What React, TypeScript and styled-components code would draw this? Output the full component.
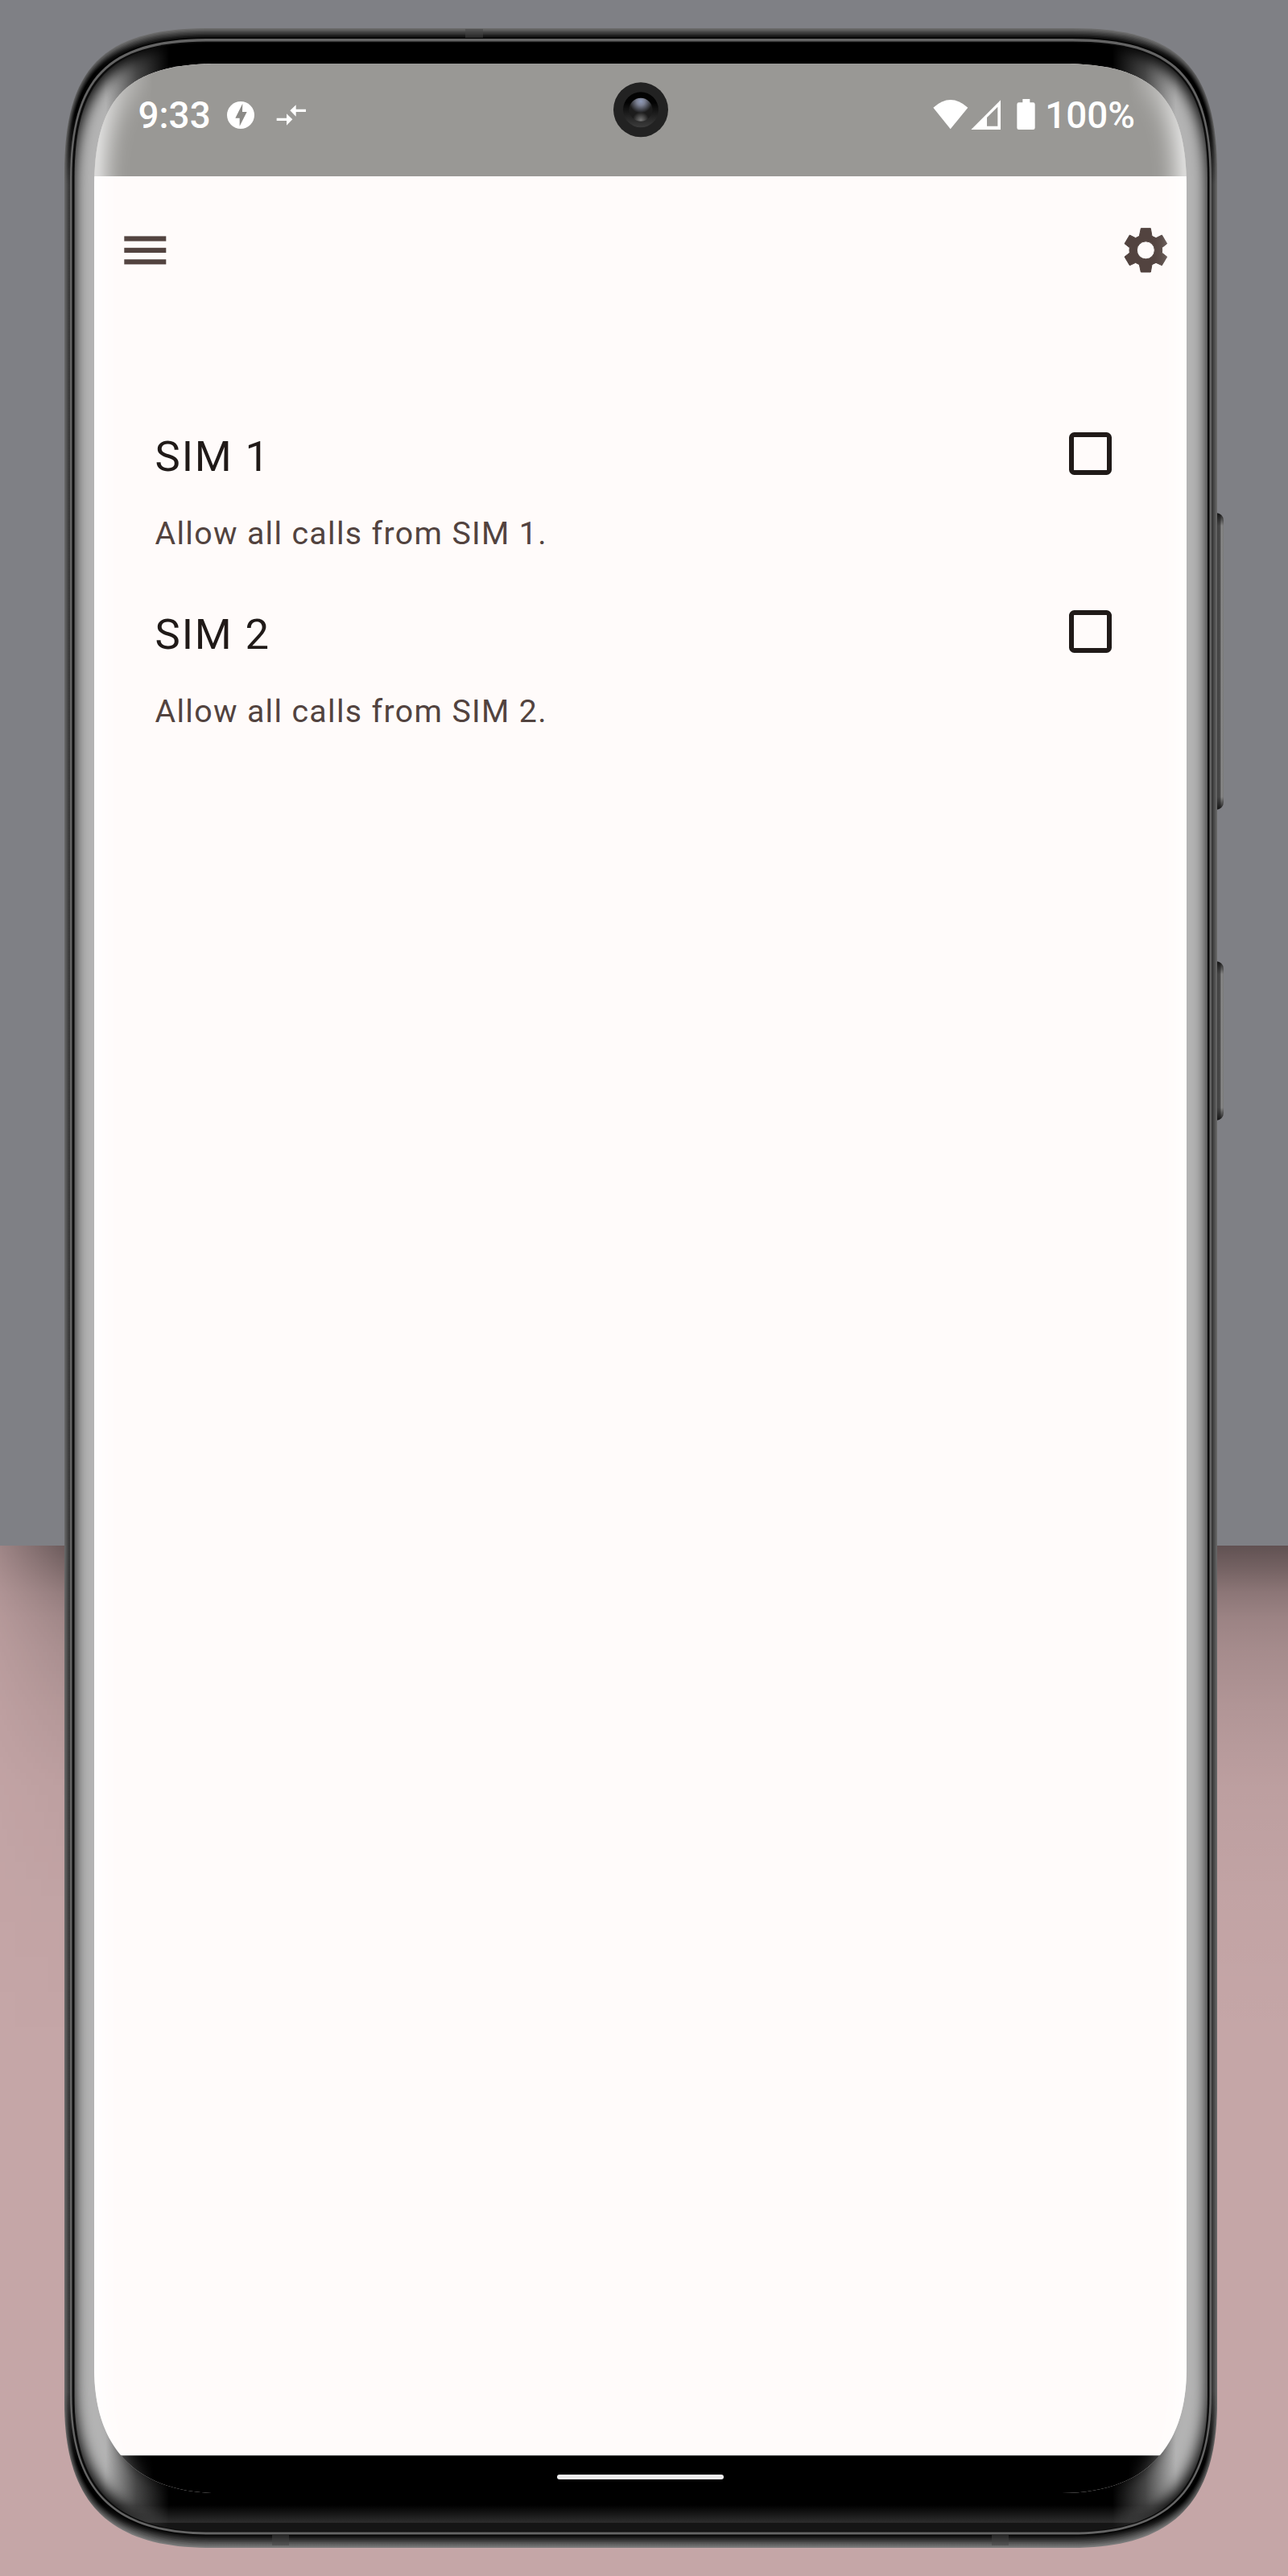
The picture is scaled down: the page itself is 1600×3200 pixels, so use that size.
import React from "react";
import styled, { createGlobalStyle } from "styled-components";

const GlobalStyle = createGlobalStyle`
  body { margin: 0; background: #7f8085; }
  * { box-sizing: border-box; }
`;

/* Rounded body outline with continuous-curvature corners; the lower pair is a little rounder. */
function outline(l: number, t: number, r: number, b: number, s: number, lower = 0.31) {
  const c = s * 0.27;
  const d = s * lower;
  return [
    `M${l + s} ${t}`,
    `H${r - s}`,
    `C${r - c} ${t} ${r} ${t + c} ${r} ${t + s}`,
    `V${b - s}`,
    `C${r} ${b - d} ${r - d} ${b} ${r - s} ${b}`,
    `H${l + s}`,
    `C${l + d} ${b} ${l} ${b - d} ${l} ${b - s}`,
    `V${t + s}`,
    `C${l} ${t + c} ${l + c} ${t} ${l + s} ${t}Z`,
  ].join("");
}

const GLASS = outline(92.5, 53, 1500, 3144.5, 168);
const DISPLAY = outline(117, 79, 1474, 3097, 155, 0.35);
const BEZEL_GLARE = outline(116, 78, 1476, 3119, 156);
const DISPLAY_GLARE = outline(112, 74, 1480, 3119, 158, 0.33);

const Page = styled.main`
  width: 1600px;
  height: 3200px;
  overflow: hidden;
  display: grid;
  font-family: Roboto, "Noto Sans", sans-serif;
  > * {
    grid-area: 1 / 1;
  }
`;

const Backdrop = styled.div`
  z-index: 0;
  display: flex;
  flex-direction: column;
`;

const BackdropTop = styled.div`
  height: 1920px;
  background: #7f8085;
`;

const BackdropBottom = styled.div`
  flex: 1;
  display: flex;
  justify-content: space-between;
  background: #c5a6a7;
`;

const Shade = styled.div<{ $fade?: boolean }>`
  width: 800px;
  height: 620px;
  background: linear-gradient(
    rgba(0, 0, 0, 0.51) 0,
    rgba(0, 0, 0, 0.41) 28px,
    rgba(0, 0, 0, 0.29) 58px,
    rgba(0, 0, 0, 0.21) 90px,
    rgba(0, 0, 0, 0.16) 130px,
    rgba(0, 0, 0, 0.1) 200px,
    rgba(0, 0, 0, 0.045) 300px,
    rgba(0, 0, 0, 0.015) 445px,
    transparent
  );
  ${(p) =>
    p.$fade &&
    "mask-image: linear-gradient(to right, rgba(0,0,0,.38), rgba(0,0,0,.88) 80px);"}
`;

const Art = styled.svg<{ $layer: number }>`
  z-index: ${(p) => p.$layer};
  display: block;
  pointer-events: none;
`;

const Screen = styled.section`
  z-index: 2;
  width: 1357px;
  height: 3018px;
  margin: 79px 0 0 117px;
  display: flex;
  flex-direction: column;
  background: #fffbfa;
  clip-path: path("${outline(0, 0, 1357, 3018, 155, 0.35)}");
`;

const StatusBar = styled.header`
  height: 140px;
  padding: 0 64px 0 54.5px;
  display: flex;
  align-items: flex-start;
  justify-content: space-between;
  background: #999895;
  color: #fff;
`;

const StatusGroup = styled.div`
  display: flex;
  align-items: flex-start;
  padding-top: 37px;
`;

const StatusText = styled.span`
  padding-top: 1px;
  font-size: 45.8px;
  line-height: 54px;
  font-weight: 500;
  white-space: nowrap;
`;

const AppBar = styled.nav`
  height: 184px;
  padding: 0 23px 0 29px;
  display: flex;
  align-items: center;
  justify-content: space-between;
  color: #52433f;
`;

const IconButton = styled.button`
  border: 0;
  padding: 0;
  background: none;
  color: inherit;
  display: flex;
`;

const List = styled.ul`
  list-style: none;
  flex: 1;
  margin: 0;
  padding: 125px 93px 0 75.5px;
  display: flex;
  flex-direction: column;
  gap: 60px;
`;

const Row = styled.li`
  display: flex;
  justify-content: space-between;
  align-items: flex-start;
`;

const RowText = styled.div`
  display: flex;
  flex-direction: column;
  gap: 31px;
`;

const Title = styled.span`
  font-size: 52.6px;
  line-height: 78px;
  letter-spacing: 1.9px;
  color: #201a18;
`;

const Summary = styled.span`
  font-size: 39.3px;
  line-height: 52px;
  letter-spacing: 1.33px;
  color: #52433f;
`;

const Checkbox = styled.span`
  width: 53px;
  height: 53px;
  margin-top: 9px;
  border: 6px solid #201a18;
  border-radius: 6.5px;
`;

const NavBar = styled.footer`
  height: 47px;
  padding-top: 23px;
  display: flex;
  justify-content: center;
  align-items: flex-start;
  background: #000;
  border-top: 1px solid #4a4a4a;
`;

const HomeHandle = styled.span`
  width: 207px;
  height: 6px;
  border-radius: 3px;
  background: #eeedee;
`;

const grey = (v: number) => {
  const n = Math.round(v);
  return `rgb(${n},${n},${n})`;
};
const mix = (a: number, b: number, t: number) => a + (b - a) * t;
const RIM_STEPS = 10;

function Rim() {
  const steps = Array.from({ length: RIM_STEPS }, (_, i) => i / (RIM_STEPS - 1));
  return (
    <>
      <defs>
        {steps.map((t, i) => {
          const top = grey(mix(108, 0, t));
          const side = grey(mix(104, 56, Math.min(1, t * 1.2)));
          const bottom = grey(mix(122, 0, t));
          const curve = grey(mix(92, 0, Math.min(1, t * 1.6)));
          return (
            <linearGradient key={i} id={`rim${i}`} gradientUnits="userSpaceOnUse" x1="0" y1="35" x2="0" y2="3165">
              <stop offset="0" stopColor={top} />
              <stop offset="0.006" stopColor={top} />
              <stop offset="0.018" stopColor={curve} />
              <stop offset="0.034" stopColor={curve} />
              <stop offset="0.062" stopColor={side} />
              <stop offset="0.938" stopColor={side} />
              <stop offset="0.966" stopColor={curve} />
              <stop offset="0.982" stopColor={curve} />
              <stop offset="0.994" stopColor={bottom} />
              <stop offset="1" stopColor={bottom} />
            </linearGradient>
          );
        })}
      </defs>
      {steps.map((t, i) => (
        <path
          key={i}
          d={outline(mix(80, 86.5, t), mix(35, 47, t), mix(1512, 1505.5, t), mix(3165, 3149.5, t), mix(180, 174, t))}
          fill={`url(#rim${i})`}
        />
      ))}
    </>
  );
}

function SideKey({ y, height }: { y: number; height: number }) {
  return (
    <g>
      <path d={`M1510 ${y}q10 1 10 10v${height - 20}q0 9 -10 10z`} fill="url(#key)" />
      <path d={`M1510 ${y}q10 1 10 10v6h-10z`} fill="url(#keyTop)" />
      <path d={`M1510 ${y + height}q10 -1 10 -10v-6h-10z`} fill="url(#keyEnd)" />
    </g>
  );
}

function DeviceBody() {
  return (
    <Art $layer={1} width="1600" height="3200" viewBox="0 0 1600 3200" aria-hidden>
      <defs>
        <linearGradient id="key" gradientUnits="userSpaceOnUse" x1="1511" y1="0" x2="1520" y2="0">
          <stop offset="0" stopColor="#3c3c3c" />
          <stop offset="0.5" stopColor="#4b4b4b" />
          <stop offset="0.7" stopColor="#8a8a8a" />
          <stop offset="1" stopColor="#777" />
        </linearGradient>
        <linearGradient id="keyTop" x1="0" y1="0" x2="0" y2="1">
          <stop offset="0" stopColor="#151515" />
          <stop offset="1" stopColor="#151515" stopOpacity="0" />
        </linearGradient>
        <linearGradient id="keyEnd" x1="0" y1="1" x2="0" y2="0">
          <stop offset="0" stopColor="#151515" />
          <stop offset="1" stopColor="#151515" stopOpacity="0" />
        </linearGradient>
        <linearGradient id="glass" gradientUnits="userSpaceOnUse" x1="0" y1="3112" x2="0" y2="3144">
          <stop offset="0" stopColor="#000" />
          <stop offset="0.67" stopColor="#2d2d2d" />
          <stop offset="0.68" stopColor="#151515" />
          <stop offset="1" stopColor="#151515" />
        </linearGradient>
        <clipPath id="glassClip">
          <path d={GLASS} />
        </clipPath>
        <filter id="bezelSoft" filterUnits="userSpaceOnUse" x="0" y="0" width="1600" height="3200">
          <feGaussianBlur stdDeviation="9" />
        </filter>
        <linearGradient id="bezelSides" gradientUnits="userSpaceOnUse" x1="92" y1="0" x2="1500" y2="0">
          <stop offset="0" stopColor="#fff" />
          <stop offset="0.028" stopColor="#fff" />
          <stop offset="0.055" stopColor="#666" />
          <stop offset="0.084" stopColor="#000" />
          <stop offset="0.916" stopColor="#000" />
          <stop offset="0.945" stopColor="#666" />
          <stop offset="0.972" stopColor="#fff" />
          <stop offset="1" stopColor="#fff" />
        </linearGradient>
        <mask id="bezelMask" maskUnits="userSpaceOnUse" x="0" y="0" width="1600" height="3200">
          <rect width="1600" height="3200" fill="url(#bezelSides)" />
        </mask>
      </defs>
      <SideKey y={637} height={369} />
      <SideKey y={1194} height={198} />
      <Rim />
      <g fill="#444" opacity="0.5">
        <rect x="578" y="36" width="22" height="11" />
        <rect x="338" y="3149" width="21" height="13" />
        <rect x="1232" y="3149" width="21" height="13" />
      </g>
      <path d={outline(87, 48, 1505, 3148.5, 174)} fill="#646464" />
      <path d={outline(89.5, 51.5, 1502.5, 3145.5, 170)} fill="#0c0c0c" />
      <path d={GLASS} fill="url(#glass)" />
      <g clipPath="url(#glassClip)">
        <g mask="url(#bezelMask)">
          <path d={BEZEL_GLARE} fill="none" stroke="#fff" strokeOpacity="0.7" strokeWidth="48" filter="url(#bezelSoft)" />
        </g>
      </g>
    </Art>
  );
}

function DisplayGlare() {
  return (
    <Art $layer={3} width="1600" height="3200" viewBox="0 0 1600 3200" aria-hidden>
      <defs>
        <clipPath id="displayClip">
          <path d={DISPLAY} />
        </clipPath>
        <filter id="displaySoft" filterUnits="userSpaceOnUse" x="0" y="0" width="1600" height="3200">
          <feGaussianBlur stdDeviation="14" />
        </filter>
        <linearGradient id="displaySides" gradientUnits="userSpaceOnUse" x1="92" y1="0" x2="1500" y2="0">
          <stop offset="0" stopColor="#fff" />
          <stop offset="0.022" stopColor="#fff" />
          <stop offset="0.045" stopColor="#777" />
          <stop offset="0.07" stopColor="#000" />
          <stop offset="0.93" stopColor="#000" />
          <stop offset="0.955" stopColor="#777" />
          <stop offset="0.978" stopColor="#fff" />
          <stop offset="1" stopColor="#fff" />
        </linearGradient>
        <mask id="displayMask" maskUnits="userSpaceOnUse" x="0" y="0" width="1600" height="3200">
          <rect width="1600" height="3200" fill="url(#displaySides)" />
        </mask>
        <linearGradient id="ring" x1="0" y1="0" x2="0" y2="1">
          <stop offset="0.3" stopColor="#030303" />
          <stop offset="1" stopColor="#3c3c3c" />
        </linearGradient>
        <radialGradient id="lensTop" cx="0.5" cy="0.14" r="0.5">
          <stop offset="0" stopColor="#8f9ab8" />
          <stop offset="0.35" stopColor="#7b8092" />
          <stop offset="1" stopColor="#1c1c1c" />
        </radialGradient>
        <radialGradient id="lensEnd" cx="0.5" cy="0.95" r="0.35">
          <stop offset="0" stopColor="#777" />
          <stop offset="1" stopColor="#777" stopOpacity="0" />
        </radialGradient>
      </defs>
      <g clipPath="url(#displayClip)">
        <g mask="url(#displayMask)">
          <path d={DISPLAY_GLARE} fill="none" stroke="#fff" strokeOpacity="0.72" strokeWidth="48" filter="url(#displaySoft)" />
        </g>
      </g>
      <circle cx="796" cy="136.3" r="34" fill="#222" />
      <circle cx="796" cy="136.3" r="22" fill="url(#ring)" />
      <circle cx="796" cy="136.3" r="14.5" fill="url(#lensTop)" />
      <circle cx="796" cy="136.3" r="14.5" fill="url(#lensEnd)" />
    </Art>
  );
}

const NoticeIcons = styled.svg`
  display: block;
  margin: 8px 0 0 18px;
`;

const SignalIcons = styled.svg`
  display: block;
  margin: 6px 10px 0 0;
`;

function Notices() {
  return (
    <NoticeIcons width="102" height="38" viewBox="660 312 306 114" fill="#fff">
      <circle cx="717" cy="369" r="51" />
      <path d="M724 326l-27 54h16v30l27-53h-17z" fill="#8b8a87" />
      <path d="M851 380h37v-16l22 21-22 22v-17h-37z" />
      <path d="M960 347h-37v-16l-22 21 22 22v-17h37z" />
    </NoticeIcons>
  );
}

function Signals() {
  return (
    <SignalIcons width="130" height="40" viewBox="58 306 390 120" fill="#fff">
      <path d="M126 421L62 341Q126 283 191 341Z" />
      <path fillRule="evenodd" d="M203 423L313 313V423ZM262 410H302V338L262 378Z" />
      <path d="M381 322H395V309H422V322H434Q441 322 441 329V416Q441 423 434 423H381Q374 423 374 416V329Q374 322 381 322Z" />
    </SignalIcons>
  );
}

function MenuIcon() {
  return (
    <svg width="70" height="70" viewBox="0 0 70 70" fill="currentColor">
      <rect x="8.3" y="17.4" width="52" height="6.2" />
      <rect x="8.3" y="31.8" width="52" height="6.2" />
      <rect x="8.3" y="46.2" width="52" height="6.2" />
    </svg>
  );
}

function GearIcon() {
  return (
    <svg width="56" height="56" viewBox="764 788 168 168" fill="currentColor">
      <path
        fillRule="evenodd"
        stroke="currentColor"
        strokeWidth="3"
        strokeLinejoin="round"
        d="M831 790H867L872 819L887 826L909 815L928 847L909 862L910 871L909 881L928 896L909 928L887 918L872 925L867 953H831L825 925L811 918L789 928L770 896L789 881L788 871L789 862L770 847L789 815L811 826L825 819ZM849 838.500A33 33 0 1 0 849 904.500A33 33 0 1 0 849 838.500Z"
      />
    </svg>
  );
}

const sims = [
  { title: "SIM 1", summary: "Allow all calls from SIM 1." },
  { title: "SIM 2", summary: "Allow all calls from SIM 2." },
];

export default function App() {
  return (
    <>
      <GlobalStyle />
      <Page>
        <Backdrop>
          <BackdropTop />
          <BackdropBottom>
            <Shade $fade />
            <Shade />
          </BackdropBottom>
        </Backdrop>
        <DeviceBody />
        <Screen>
          <StatusBar>
            <StatusGroup>
              <StatusText>9:33</StatusText>
              <Notices />
            </StatusGroup>
            <StatusGroup>
              <Signals />
              <StatusText>100%</StatusText>
            </StatusGroup>
          </StatusBar>
          <AppBar>
            <IconButton aria-label="Menu">
              <MenuIcon />
            </IconButton>
            <IconButton aria-label="Settings">
              <GearIcon />
            </IconButton>
          </AppBar>
          <List>
            {sims.map((s) => (
              <Row key={s.title}>
                <RowText>
                  <Title>{s.title}</Title>
                  <Summary>{s.summary}</Summary>
                </RowText>
                <Checkbox role="checkbox" aria-checked="false" />
              </Row>
            ))}
          </List>
          <NavBar>
            <HomeHandle />
          </NavBar>
        </Screen>
        <DisplayGlare />
      </Page>
    </>
  );
}
